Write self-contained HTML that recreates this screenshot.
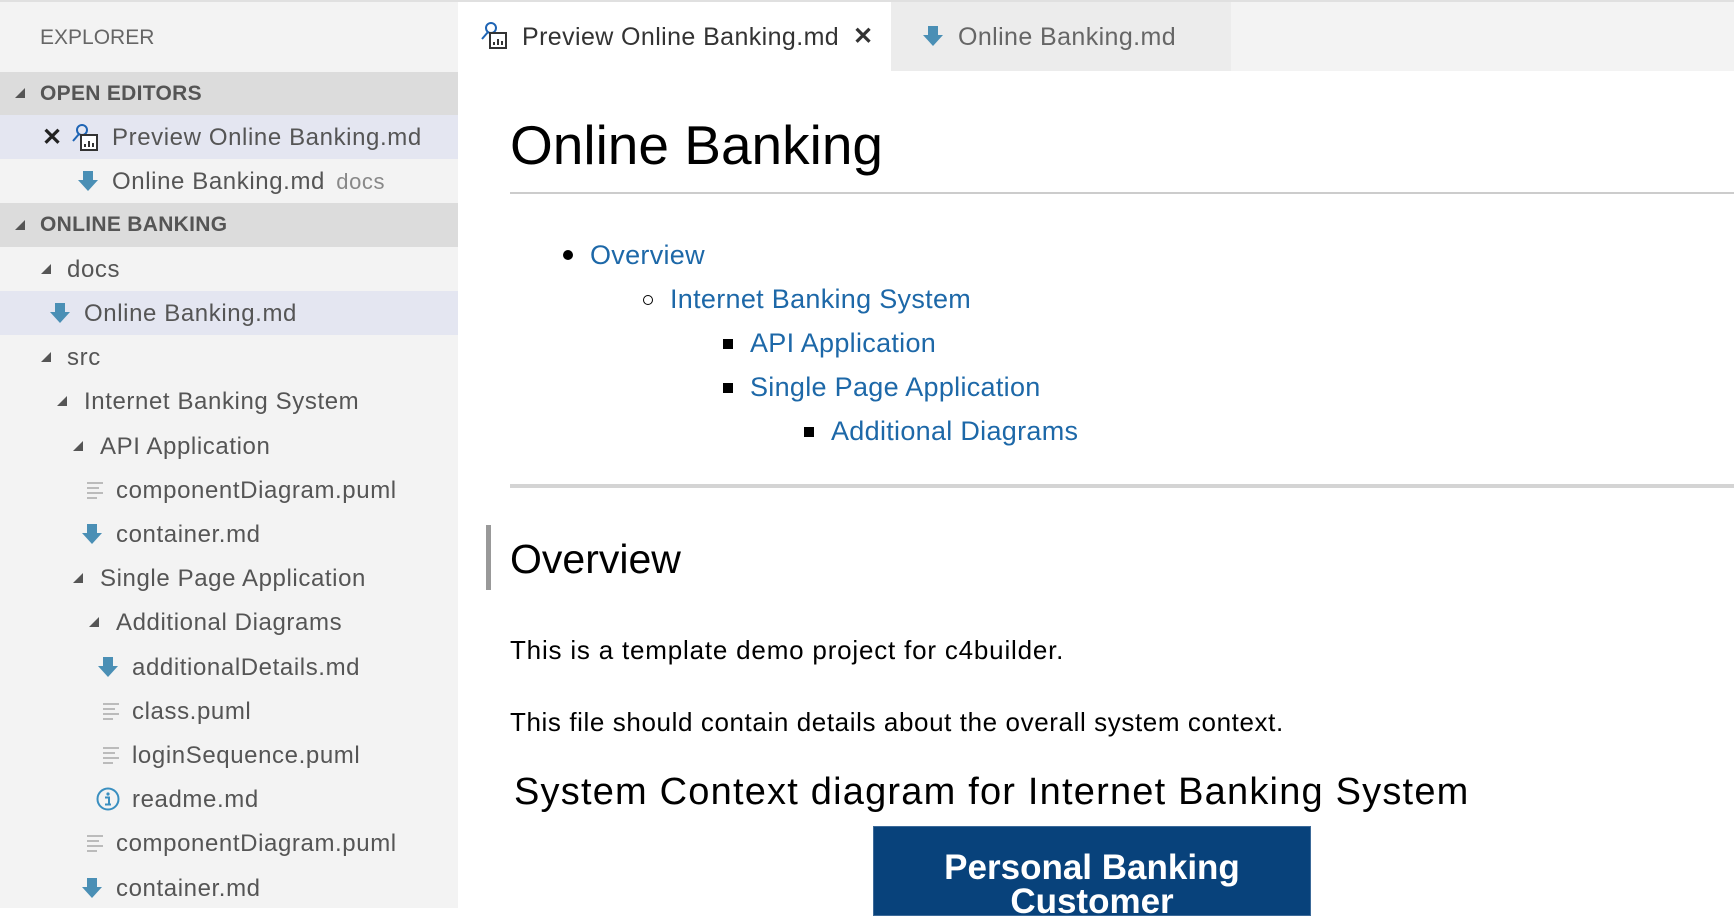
<!DOCTYPE html>
<html><head><meta charset="utf-8"><style>
*{margin:0;padding:0;box-sizing:border-box}
body{width:1734px;height:908px;overflow:hidden;background:#fff;font-family:"Liberation Sans",sans-serif;position:relative}
.a{position:absolute;white-space:nowrap}
#side{position:absolute;left:0;top:0;width:458px;height:908px;background:#f3f3f3}
.row{position:absolute;left:0;width:458px;height:44px;line-height:46px;font-size:24px;letter-spacing:0.6px;color:#555}
.band{background:#dcdcdc;font-weight:bold;color:#555;font-size:21px;letter-spacing:0.3px}
.sel{background:#e4e6f1}
.tw{position:absolute;top:17px;width:0;height:0;border-left:10px solid transparent;border-bottom:10px solid #555}
.t{position:absolute;top:0}
.md{position:absolute;top:11px;width:22px;height:22px}
.li{position:absolute;top:12px;width:20px;height:20px}
.lnk{color:#1d68a8;font-size:27px;letter-spacing:0.3px}
</style></head><body>
<div id="side">
<div class="a" style="left:40px;top:26px;font-size:21px;color:#666">EXPLORER</div>
<div class="row band" style="top:72px;height:43px;line-height:43px"><div class="tw" style="left:15px;top:16px"></div><div class="t" style="left:40px">OPEN EDITORS</div></div>
<div class="row sel" style="top:115px">
 <div class="t" style="left:42px;font-weight:bold;color:#222;font-size:24px">✕</div>
 <svg class="md" style="left:71px;width:30px;height:30px;top:7px" viewBox="0 0 30 30"><circle cx="11" cy="8" r="5" fill="none" stroke="#1e64b4" stroke-width="2"/><path d="M8 12 L2 19" stroke="#1e64b4" stroke-width="2"/><rect x="10" y="13" width="16" height="15" fill="#fff" stroke="#333" stroke-width="2"/><path d="M14 25v-3M18 25v-6M22 25v-4" stroke="#333" stroke-width="2"/></svg>
 <div class="t" style="left:112px">Preview Online Banking.md</div></div>
<div class="row" style="top:159px"><svg class="md" style="left:77px" viewBox="0 0 22 22"><path d="M6 1h10v9h5l-10 11-10-11h5z" fill="#4a8fb5"/></svg><div class="t" style="left:112px">Online Banking.md <span style="color:#888;font-size:22px;margin-left:4px">docs</span></div></div>
<div class="row band" style="top:203px;line-height:44px"><div class="tw" style="left:15px"></div><div class="t" style="left:40px">ONLINE BANKING</div></div>
<div class="row" style="top:247px"><div class="tw" style="left:41px"></div><div class="t" style="left:67px">docs</div></div>
<div class="row sel" style="top:291px"><svg class="md" style="left:49px" viewBox="0 0 22 22"><path d="M6 1h10v9h5l-10 11-10-11h5z" fill="#4a8fb5"/></svg><div class="t" style="left:84px">Online Banking.md</div></div>
<div class="row" style="top:335px"><div class="tw" style="left:41px"></div><div class="t" style="left:67px">src</div></div>
<div class="row" style="top:379px"><div class="tw" style="left:57px"></div><div class="t" style="left:84px">Internet Banking System</div></div>
<div class="row" style="top:424px"><div class="tw" style="left:73px"></div><div class="t" style="left:100px">API Application</div></div>
<div class="row" style="top:468px"><svg class="li" style="left:86px" viewBox="0 0 20 20"><path d="M1 3h16M1 8h12M1 13h16M1 18h10" stroke="#bbb" stroke-width="2"/></svg><div class="t" style="left:116px">componentDiagram.puml</div></div>
<div class="row" style="top:512px"><svg class="md" style="left:81px" viewBox="0 0 22 22"><path d="M6 1h10v9h5l-10 11-10-11h5z" fill="#4a8fb5"/></svg><div class="t" style="left:116px">container.md</div></div>
<div class="row" style="top:556px"><div class="tw" style="left:73px"></div><div class="t" style="left:100px">Single Page Application</div></div>
<div class="row" style="top:600px"><div class="tw" style="left:89px"></div><div class="t" style="left:116px">Additional Diagrams</div></div>
<div class="row" style="top:645px"><svg class="md" style="left:97px" viewBox="0 0 22 22"><path d="M6 1h10v9h5l-10 11-10-11h5z" fill="#4a8fb5"/></svg><div class="t" style="left:132px">additionalDetails.md</div></div>
<div class="row" style="top:689px"><svg class="li" style="left:102px" viewBox="0 0 20 20"><path d="M1 3h16M1 8h12M1 13h16M1 18h10" stroke="#bbb" stroke-width="2"/></svg><div class="t" style="left:132px">class.puml</div></div>
<div class="row" style="top:733px"><svg class="li" style="left:102px" viewBox="0 0 20 20"><path d="M1 3h16M1 8h12M1 13h16M1 18h10" stroke="#bbb" stroke-width="2"/></svg><div class="t" style="left:132px">loginSequence.puml</div></div>
<div class="row" style="top:777px"><svg class="md" style="left:96px;width:24px;height:24px;top:10px" viewBox="0 0 24 24"><circle cx="12" cy="12" r="10.5" fill="none" stroke="#3a8fc0" stroke-width="2"/><circle cx="12" cy="7" r="1.6" fill="#3a8fc0"/><path d="M9 10.5h4v7M9 17.5h6" stroke="#3a8fc0" stroke-width="2" fill="none"/></svg><div class="t" style="left:132px">readme.md</div></div>
<div class="row" style="top:821px"><svg class="li" style="left:86px" viewBox="0 0 20 20"><path d="M1 3h16M1 8h12M1 13h16M1 18h10" stroke="#bbb" stroke-width="2"/></svg><div class="t" style="left:116px">componentDiagram.puml</div></div>
<div class="row" style="top:866px"><svg class="md" style="left:81px" viewBox="0 0 22 22"><path d="M6 1h10v9h5l-10 11-10-11h5z" fill="#4a8fb5"/></svg><div class="t" style="left:116px">container.md</div></div>
</div>
<!-- tabs -->
<div class="a" style="left:458px;top:0;width:1276px;height:71px;background:#f3f3f3"></div>
<div class="a" style="left:458px;top:0;width:433px;height:71px;background:#fff"></div>
<div class="a" style="left:891px;top:0;width:340px;height:71px;background:#ececec"></div>
<div class="a" style="left:0;top:0;width:1734px;height:2px;background:#e0e0e0"></div>
<svg class="a" style="left:480px;top:20px" width="30" height="30" viewBox="0 0 30 30"><circle cx="11" cy="8" r="5" fill="none" stroke="#1e64b4" stroke-width="2"/><path d="M8 12 L2 19" stroke="#1e64b4" stroke-width="2"/><rect x="10" y="13" width="16" height="15" fill="#fff" stroke="#333" stroke-width="2"/><path d="M14 25v-3M18 25v-6M22 25v-4" stroke="#333" stroke-width="2"/></svg>
<div class="a" style="left:522px;top:23px;font-size:25px;letter-spacing:0.4px;color:#333">Preview Online Banking.md</div>
<div class="a" style="left:853px;top:22px;font-size:24px;color:#333;font-weight:bold">✕</div>
<svg class="a" style="left:922px;top:25px" width="22" height="22" viewBox="0 0 22 22"><path d="M6 1h10v9h5l-10 11-10-11h5z" fill="#4a8fb5"/></svg>
<div class="a" style="left:958px;top:23px;font-size:25px;letter-spacing:0.4px;color:#666">Online Banking.md</div>
<!-- content -->
<div class="a" style="left:510px;top:113px;font-size:55px;color:#000">Online Banking</div>
<div class="a" style="left:510px;top:192px;width:1224px;height:2px;background:#ccc"></div>
<div class="a" style="left:563px;top:250px;width:10px;height:10px;border-radius:50%;background:#000"></div>
<div class="a lnk" style="left:590px;top:240px">Overview</div>
<div class="a" style="left:643px;top:295px;width:10px;height:10px;border-radius:50%;border:1.5px solid #000"></div>
<div class="a lnk" style="left:670px;top:284px">Internet Banking System</div>
<div class="a" style="left:723px;top:339px;width:10px;height:10px;background:#000"></div>
<div class="a lnk" style="left:750px;top:328px">API Application</div>
<div class="a" style="left:723px;top:383px;width:10px;height:10px;background:#000"></div>
<div class="a lnk" style="left:750px;top:372px">Single Page Application</div>
<div class="a" style="left:804px;top:427px;width:10px;height:10px;background:#000"></div>
<div class="a lnk" style="left:831px;top:416px">Additional Diagrams</div>
<div class="a" style="left:510px;top:484px;width:1224px;height:4px;background:#d4d4d4"></div>
<div class="a" style="left:486px;top:525px;width:5px;height:65px;background:#999"></div>
<div class="a" style="left:510px;top:536px;font-size:41px;color:#000">Overview</div>
<div class="a" style="left:510px;top:635px;font-size:26px;letter-spacing:0.8px;color:#000">This is a template demo project for c4builder.</div>
<div class="a" style="left:510px;top:707px;font-size:26px;letter-spacing:0.6px;color:#000">This file should contain details about the overall system context.</div>
<div class="a" style="left:514px;top:771px;font-size:38px;letter-spacing:1.2px;color:#000">System Context diagram for Internet Banking System</div>
<div class="a" style="left:873px;top:826px;width:438px;height:90px;background:#08427b;border:1px solid #3c6a99"></div>
<div class="a" style="left:873px;top:851px;width:438px;text-align:center;font-size:35px;font-weight:bold;color:#fff;line-height:34px">Personal Banking<br>Customer</div>
</body></html>
